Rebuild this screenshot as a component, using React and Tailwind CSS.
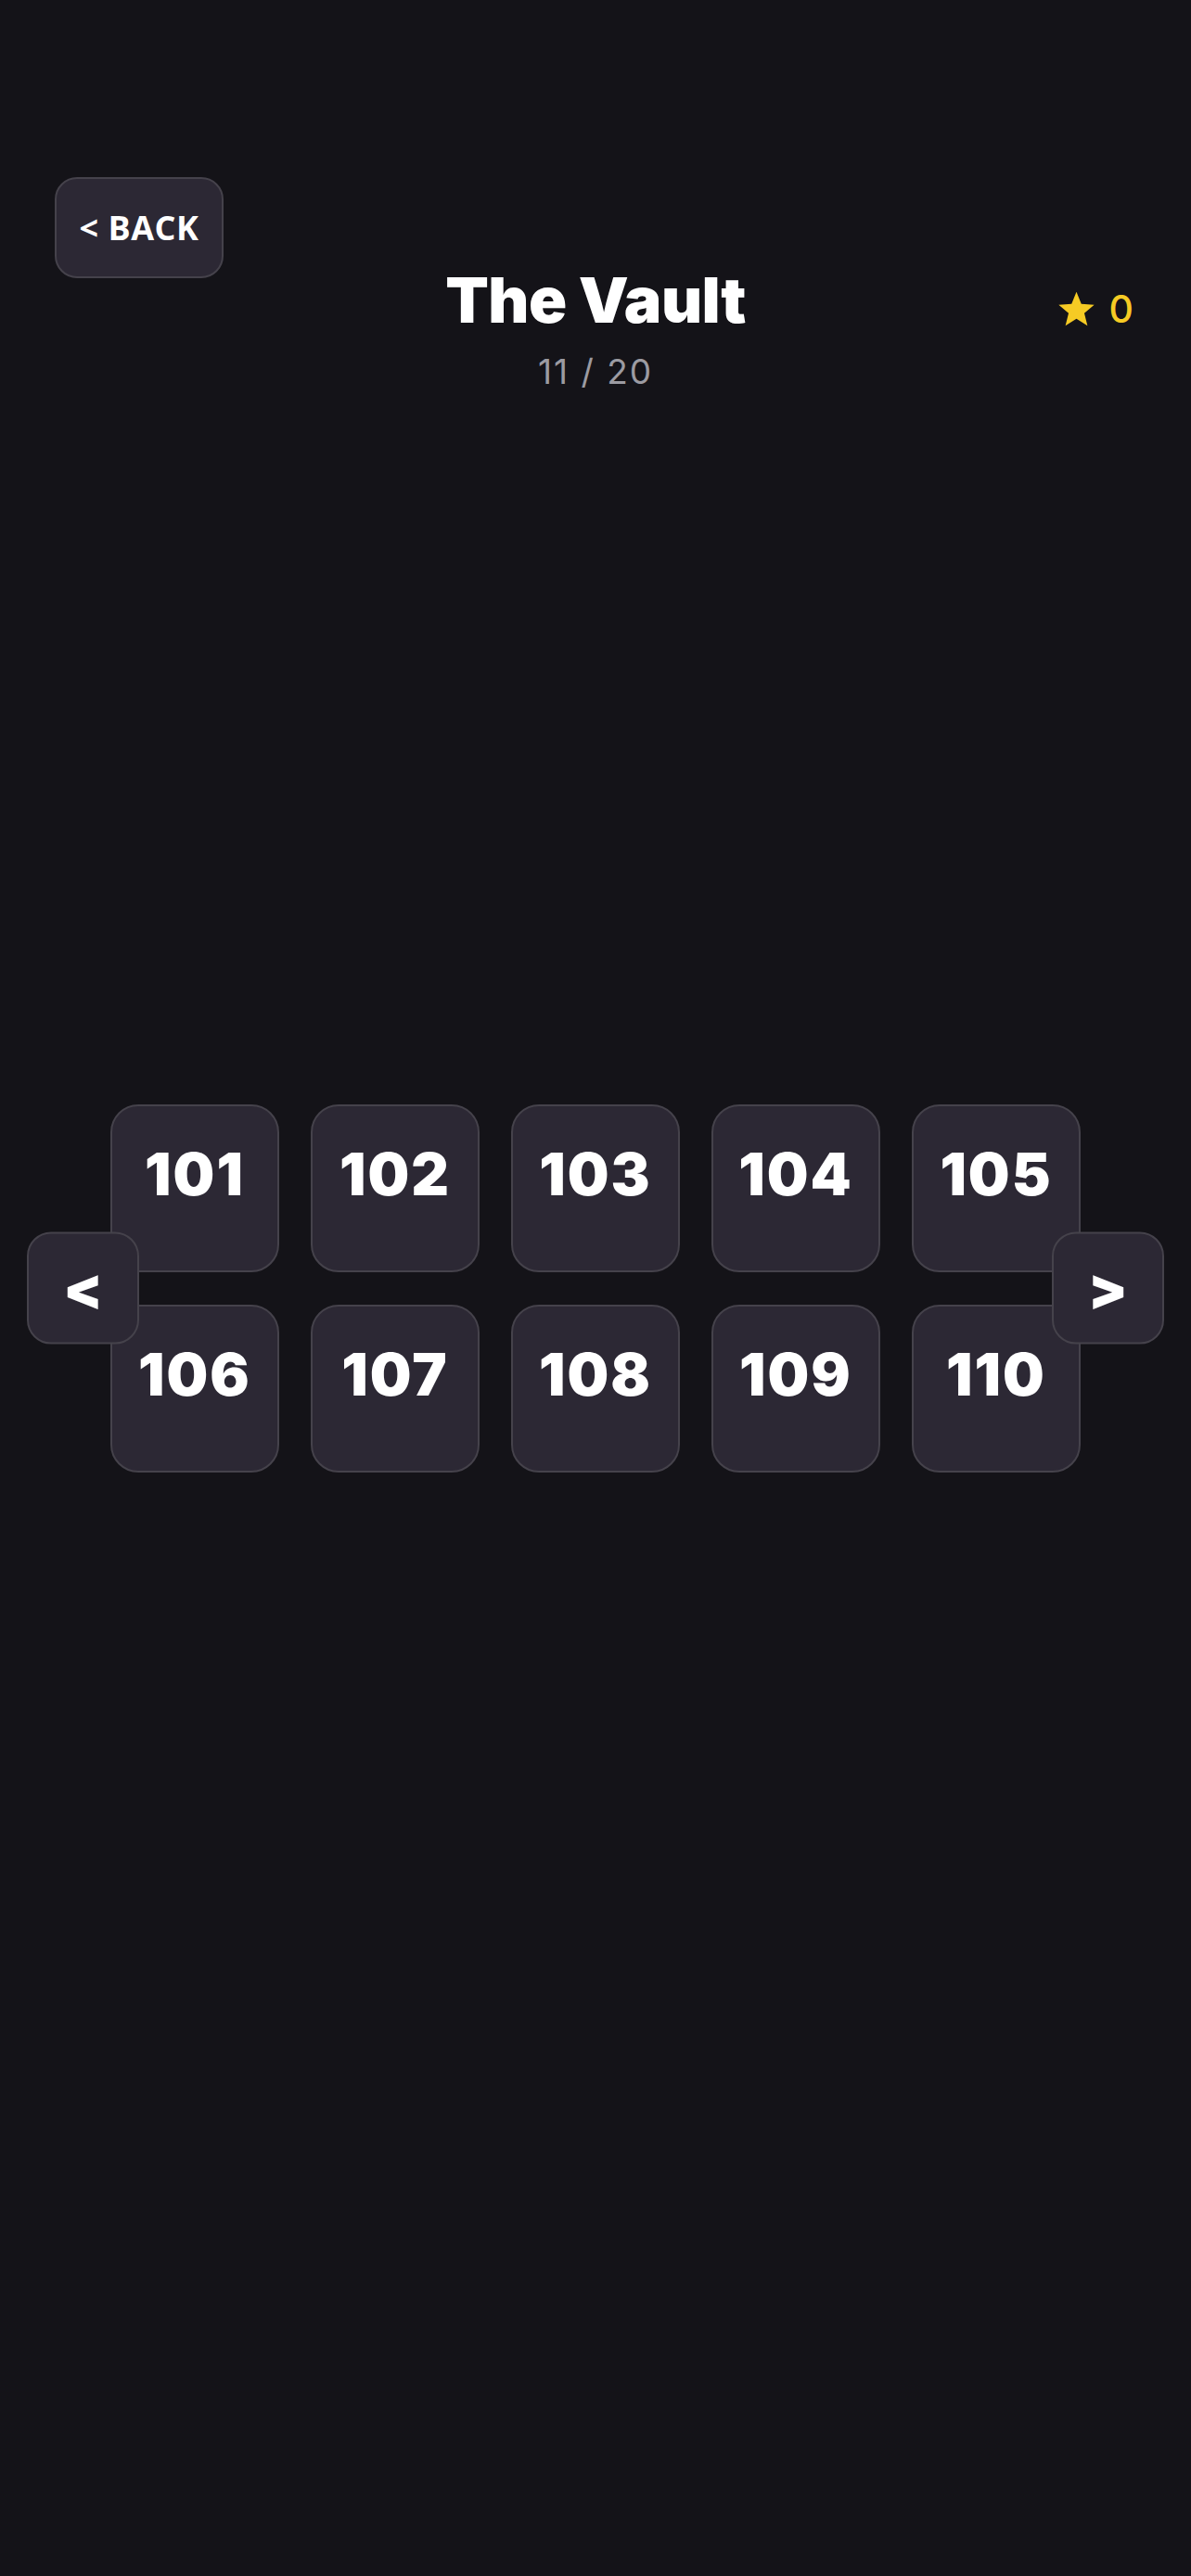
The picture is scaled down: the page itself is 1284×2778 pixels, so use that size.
const levels = [101, 102, 103, 104, 105, 106, 107, 108, 109, 110];

const Star = () => (
  <svg width="41" height="39" viewBox="0 0 24 23" className="block">
    <path d="M12 0.5l3.1 7.6 8.2 0.6-6.3 5.3 2 8-7-4.4-7 4.4 2-8L0.7 8.7l8.2-0.6z" fill="#f6cb24" />
  </svg>
);

const LevelTile = ({ n }) => (
  <button className="w-[182px] h-[181px] rounded-[30px] border-2 border-[#45424b] bg-[#2c2834] flex justify-center pt-[42px]">
    <span className="text-white text-[63px] leading-none font-black tracking-[2px]" style={{ fontFamily: 'Inter, sans-serif' }}>{n}</span>
  </button>
);

const NavButton = ({ label, side }) => (
  <button
    className={`absolute top-1/2 -translate-y-1/2 ${side === 'left' ? 'left-[29px]' : 'right-[29px]'} w-[121px] h-[121px] rounded-[26px] border-2 border-[#45424b] bg-[#2c2834] flex items-center justify-center text-white text-[62px] leading-none font-black`}
    style={{ fontFamily: 'Inter, sans-serif' }}
  >
    {label}
  </button>
);

export default function App() {
  return (
    <div className="min-h-screen w-full bg-[#141318] flex flex-col" style={{ fontFamily: 'Inter, sans-serif' }}>
      {/* header */}
      <header className="h-[424px] pt-[191px] flex flex-col">
        <div className="pl-[59px]">
          <button className="w-[182px] h-[109px] rounded-[24px] border-2 border-[#45424b] bg-[#2c2834] flex items-center justify-center text-white text-[36px] font-bold tracking-[0.5px]" style={{ fontFamily: '"Open Sans", sans-serif' }}>
            &lt; BACK
          </button>
        </div>
        <div className="-mt-[11px] grid grid-cols-[1fr_auto_1fr] items-center px-[62px]">
          <div />
          <h1 className="text-white text-[68px] leading-[68px] font-black tracking-[-0.5px]">The Vault</h1>
          <div className="justify-self-end flex items-center gap-[15px] mt-[20px]">
            <Star />
            <span className="text-[#f6cb24] text-[41px] leading-none font-medium">0</span>
          </div>
        </div>
        <p className="mt-[22px] text-center text-[#9c9ba2] text-[37px] leading-[44px] tracking-[2px]">11 / 20</p>
      </header>

      {/* level grid */}
      <main className="flex-1 relative flex items-center justify-center">
        <div className="grid grid-cols-5 gap-x-[34px] gap-y-[35px]">
          {levels.map((n) => (
            <LevelTile key={n} n={n} />
          ))}
        </div>
        <NavButton label="<" side="left" />
        <NavButton label=">" side="right" />
      </main>

      <div className="h-[424px]" />
    </div>
  );
}
